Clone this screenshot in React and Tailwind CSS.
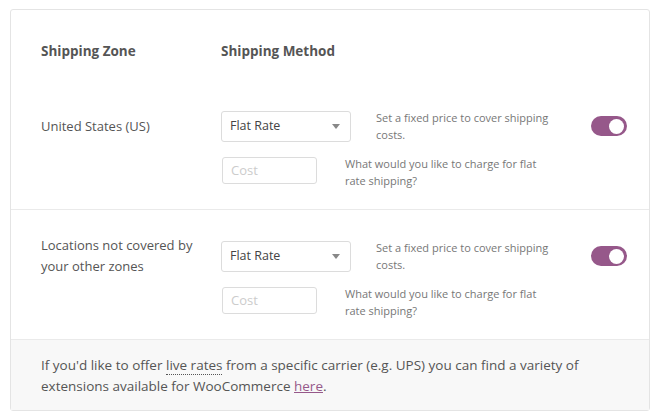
import React from 'react';

const font = { fontFamily: '"Open Sans", "Noto Sans", sans-serif' };

function Toggle() {
  return (
    <div className="ml-auto flex h-[20px] w-[36px] items-center justify-end rounded-full bg-[#96588a] px-[3px]">
      <div className="h-[15px] w-[15px] rounded-full bg-white" />
    </div>
  );
}

function Select() {
  return (
    <div className="flex h-[31px] w-[130px] shrink-0 items-center justify-between rounded-[3px] border border-[#dcdcdc] bg-white pl-[8px] pr-[10px] text-[12.5px] text-[#444]">
      <span>Flat Rate</span>
      <svg width="8" height="5" viewBox="0 0 8 5"><path d="M0 0h8L4 5z" fill="#888" /></svg>
    </div>
  );
}

function ZoneRow({ label, last }) {
  return (
    <div className={`pl-[30px] pr-[22px] pt-[29px] pb-[20px] ${last ? '' : 'border-b border-[#eaeaea]'}`}>
      <div className="flex h-[34px] items-center">
        <div className="w-[180px] shrink-0 pr-[10px] text-[13px] leading-[21px] text-[#555]">{label}</div>
        <Select />
        <div className="ml-[25px] w-[185px] text-[11px] leading-[17px] text-[#777]">
          Set a fixed price to cover shipping costs.
        </div>
        <Toggle />
      </div>
      <div className="mt-[14px] flex items-start pl-[181px]">
        <div className="flex h-[27px] w-[95px] shrink-0 items-center rounded-[3px] border border-[#dcdcdc] bg-white px-[8px] text-[13px] text-[#ccc]">
          Cost
        </div>
        <div className="-mt-[2px] ml-[28px] w-[200px] text-[11px] leading-[17px] text-[#777]">
          What would you like to charge for flat rate shipping?
        </div>
      </div>
    </div>
  );
}

export default function App() {
  return (
    <div className="min-h-screen bg-white pt-[9px] pl-[10px] pr-[11px]" style={font}>
      <div className="w-[640px] rounded-[3px] border border-[#e4e4e4] bg-white">
        <div className="flex px-[30px] pt-[31px] pb-[19px] text-[13.5px] font-bold leading-[20px] text-[#555]">
          <div className="w-[180px]">Shipping Zone</div>
          <div>Shipping Method</div>
        </div>
        <ZoneRow label="United States (US)" />
        <ZoneRow label={<>Locations not covered by<br />your other zones</>} last />
        <div className="border-t border-[#eaeaea] bg-[#f8f8f8] pl-[30px] pr-[20px] pt-[15px] pb-[13px] text-[13.5px] leading-[21px] text-[#555]">
          If you'd like to offer{' '}
          <span className="border-b border-dotted border-[#555]">live rates</span> from a specific carrier (e.g. UPS) you can find a variety of extensions available for WooCommerce{' '}
          <a className="text-[#96588a] underline">here</a>.
        </div>
      </div>
    </div>
  );
}
